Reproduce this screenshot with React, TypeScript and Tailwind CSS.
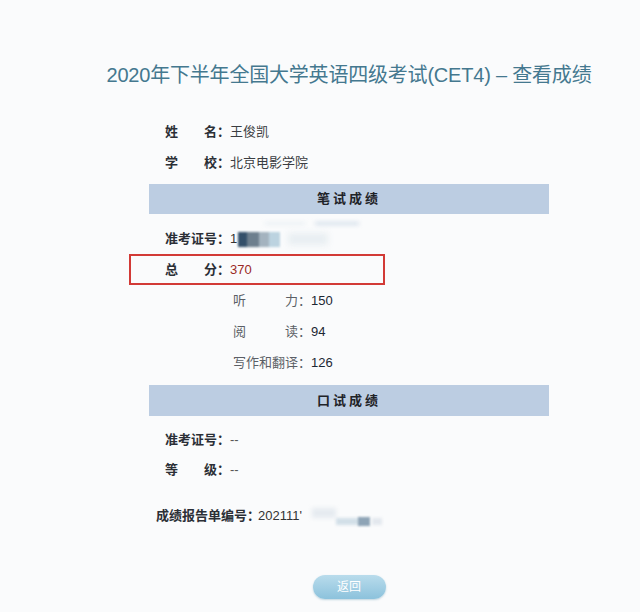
import React from 'react';

const Label = ({ parts, width = 'w-[65px]' }: { parts: string[]; width?: string }) => (
  <div className={`flex justify-between ${width}`}>
    {parts.map((p, i) => (
      <span key={i}>{p}</span>
    ))}
  </div>
);

export default function App() {
  return (
    <div className="min-h-[612px] w-[640px] bg-[#fafbfc] font-['Liberation_Sans','Noto_Sans_CJK_SC',sans-serif] text-[13px] text-[#2b2f36]">
      <div className="pl-[58px]">
        {/* Title */}
        <h1 className="pt-[61px] text-center text-[20px] leading-[28px] font-normal text-[#44788f] tracking-[-0.2px]">
          2020年下半年全国大学英语四级考试(CET4) – 查看成绩
        </h1>

        <div className="mx-auto w-[400px] mt-[27px]">
          {/* Basic info */}
          <div className="pl-[16px]">
            <div className="flex items-center h-[31px]">
              <div className="font-bold"><Label parts={['姓', '名：']} /></div>
              <span className="text-[#3a3d42]">王俊凯</span>
            </div>
            <div className="flex items-center h-[31px]">
              <div className="font-bold"><Label parts={['学', '校：']} /></div>
              <span className="text-[#3a3d42]">北京电影学院</span>
            </div>
          </div>

          {/* Written exam bar */}
          <div className="mt-[6px] h-[30px] bg-[#bccde2] flex items-center justify-center font-bold tracking-[3px] text-[#1f2328]">
            笔试成绩
          </div>

          <div className="pl-[16px] mt-[10px]">
            <div className="relative flex items-center h-[30px]">
              <div className="font-bold"><Label parts={['准考证号：']} /></div>
              <span className="text-[#333]">1</span>
              <div className="flex items-center blur-[1.2px] ml-[1px]">
                <div className="w-[9px] h-[15px] bg-[#34506a]" />
                <div className="w-[12px] h-[15px] bg-[#6d7f8e]" />
                <div className="w-[10px] h-[15px] bg-[#a4b3bf]" />
                <div className="w-[11px] h-[15px] bg-[#bcd3e0]" />
              </div>
              <div className="ml-[8px] w-[40px] h-[12px] bg-[#e8eef2] blur-[3px]" />
              <div className="absolute left-[100px] top-[-2px] w-[40px] h-[3px] bg-[#eaeff4] blur-[2px]" />
              <div className="absolute left-[150px] top-[-2px] w-[44px] h-[3px] bg-[#d3deea] blur-[2px]" />
            </div>

            {/* Total score highlighted */}
            <div className="ml-[-36px] w-[256px] h-[31px] border-2 border-[#d23a36] pl-[34px] flex items-center">
              <div className="font-bold"><Label parts={['总', '分：']} /></div>
              <span className="text-[#9b2a26]">370</span>
            </div>

            <div className="pl-[68px] text-[#5b5f66]">
              <div className="flex items-center h-[31px]">
                <Label parts={['听', '力：']} width="w-[78px]" />
                <span className="text-[#1c2733]">150</span>
              </div>
              <div className="flex items-center h-[31px]">
                <Label parts={['阅', '读：']} width="w-[78px]" />
                <span className="text-[#1c2733]">94</span>
              </div>
              <div className="flex items-center h-[31px]">
                <Label parts={['写作和翻译：']} width="w-[78px]" />
                <span className="text-[#1c2733]">126</span>
              </div>
            </div>
          </div>

          {/* Oral exam bar */}
          <div className="mt-[7px] h-[31px] bg-[#bccde2] flex items-center justify-center font-bold tracking-[3px] text-[#1f2328]">
            口试成绩
          </div>

          <div className="pl-[16px] mt-[9px]">
            <div className="flex items-center h-[30px]">
              <div className="font-bold"><Label parts={['准考证号：']} /></div>
              <span className="text-[#555]">--</span>
            </div>
            <div className="flex items-center h-[30px]">
              <div className="font-bold"><Label parts={['等', '级：']} /></div>
              <span className="text-[#555]">--</span>
            </div>

            <div className="ml-[-9px] mt-[16px] flex items-center h-[30px]">
              <span className="font-bold w-[102px] whitespace-nowrap shrink-0">成绩报告单编号：</span>
              <span className="text-[#333]">202111'</span>
              <div className="relative ml-[6px] h-[30px] w-[80px]">
                <div className="absolute left-[4px] top-[7px] w-[24px] h-[10px] bg-[#e6ebf0] blur-[2px]" />
                <div className="absolute left-[28px] top-[17px] w-[24px] h-[7px] bg-[#d2dfe8] blur-[1.5px]" />
                <div className="absolute left-[50px] top-[16px] w-[12px] h-[9px] bg-[#8ea4b6] blur-[1px]" />
                <div className="absolute left-[64px] top-[17px] w-[10px] h-[7px] bg-[#e3e8ee] blur-[1.5px]" />
              </div>
            </div>
          </div>

          {/* Back button */}
          <div className="mt-[44px] flex justify-center">
            <button className="w-[73px] h-[24px] rounded-full bg-gradient-to-b from-[#b9dcec] to-[#8cc2dc] text-white text-[12px] leading-none shadow-[0_1px_2px_rgba(80,140,170,0.35)]">
              返回
            </button>
          </div>
        </div>
      </div>
    </div>
  );
}
